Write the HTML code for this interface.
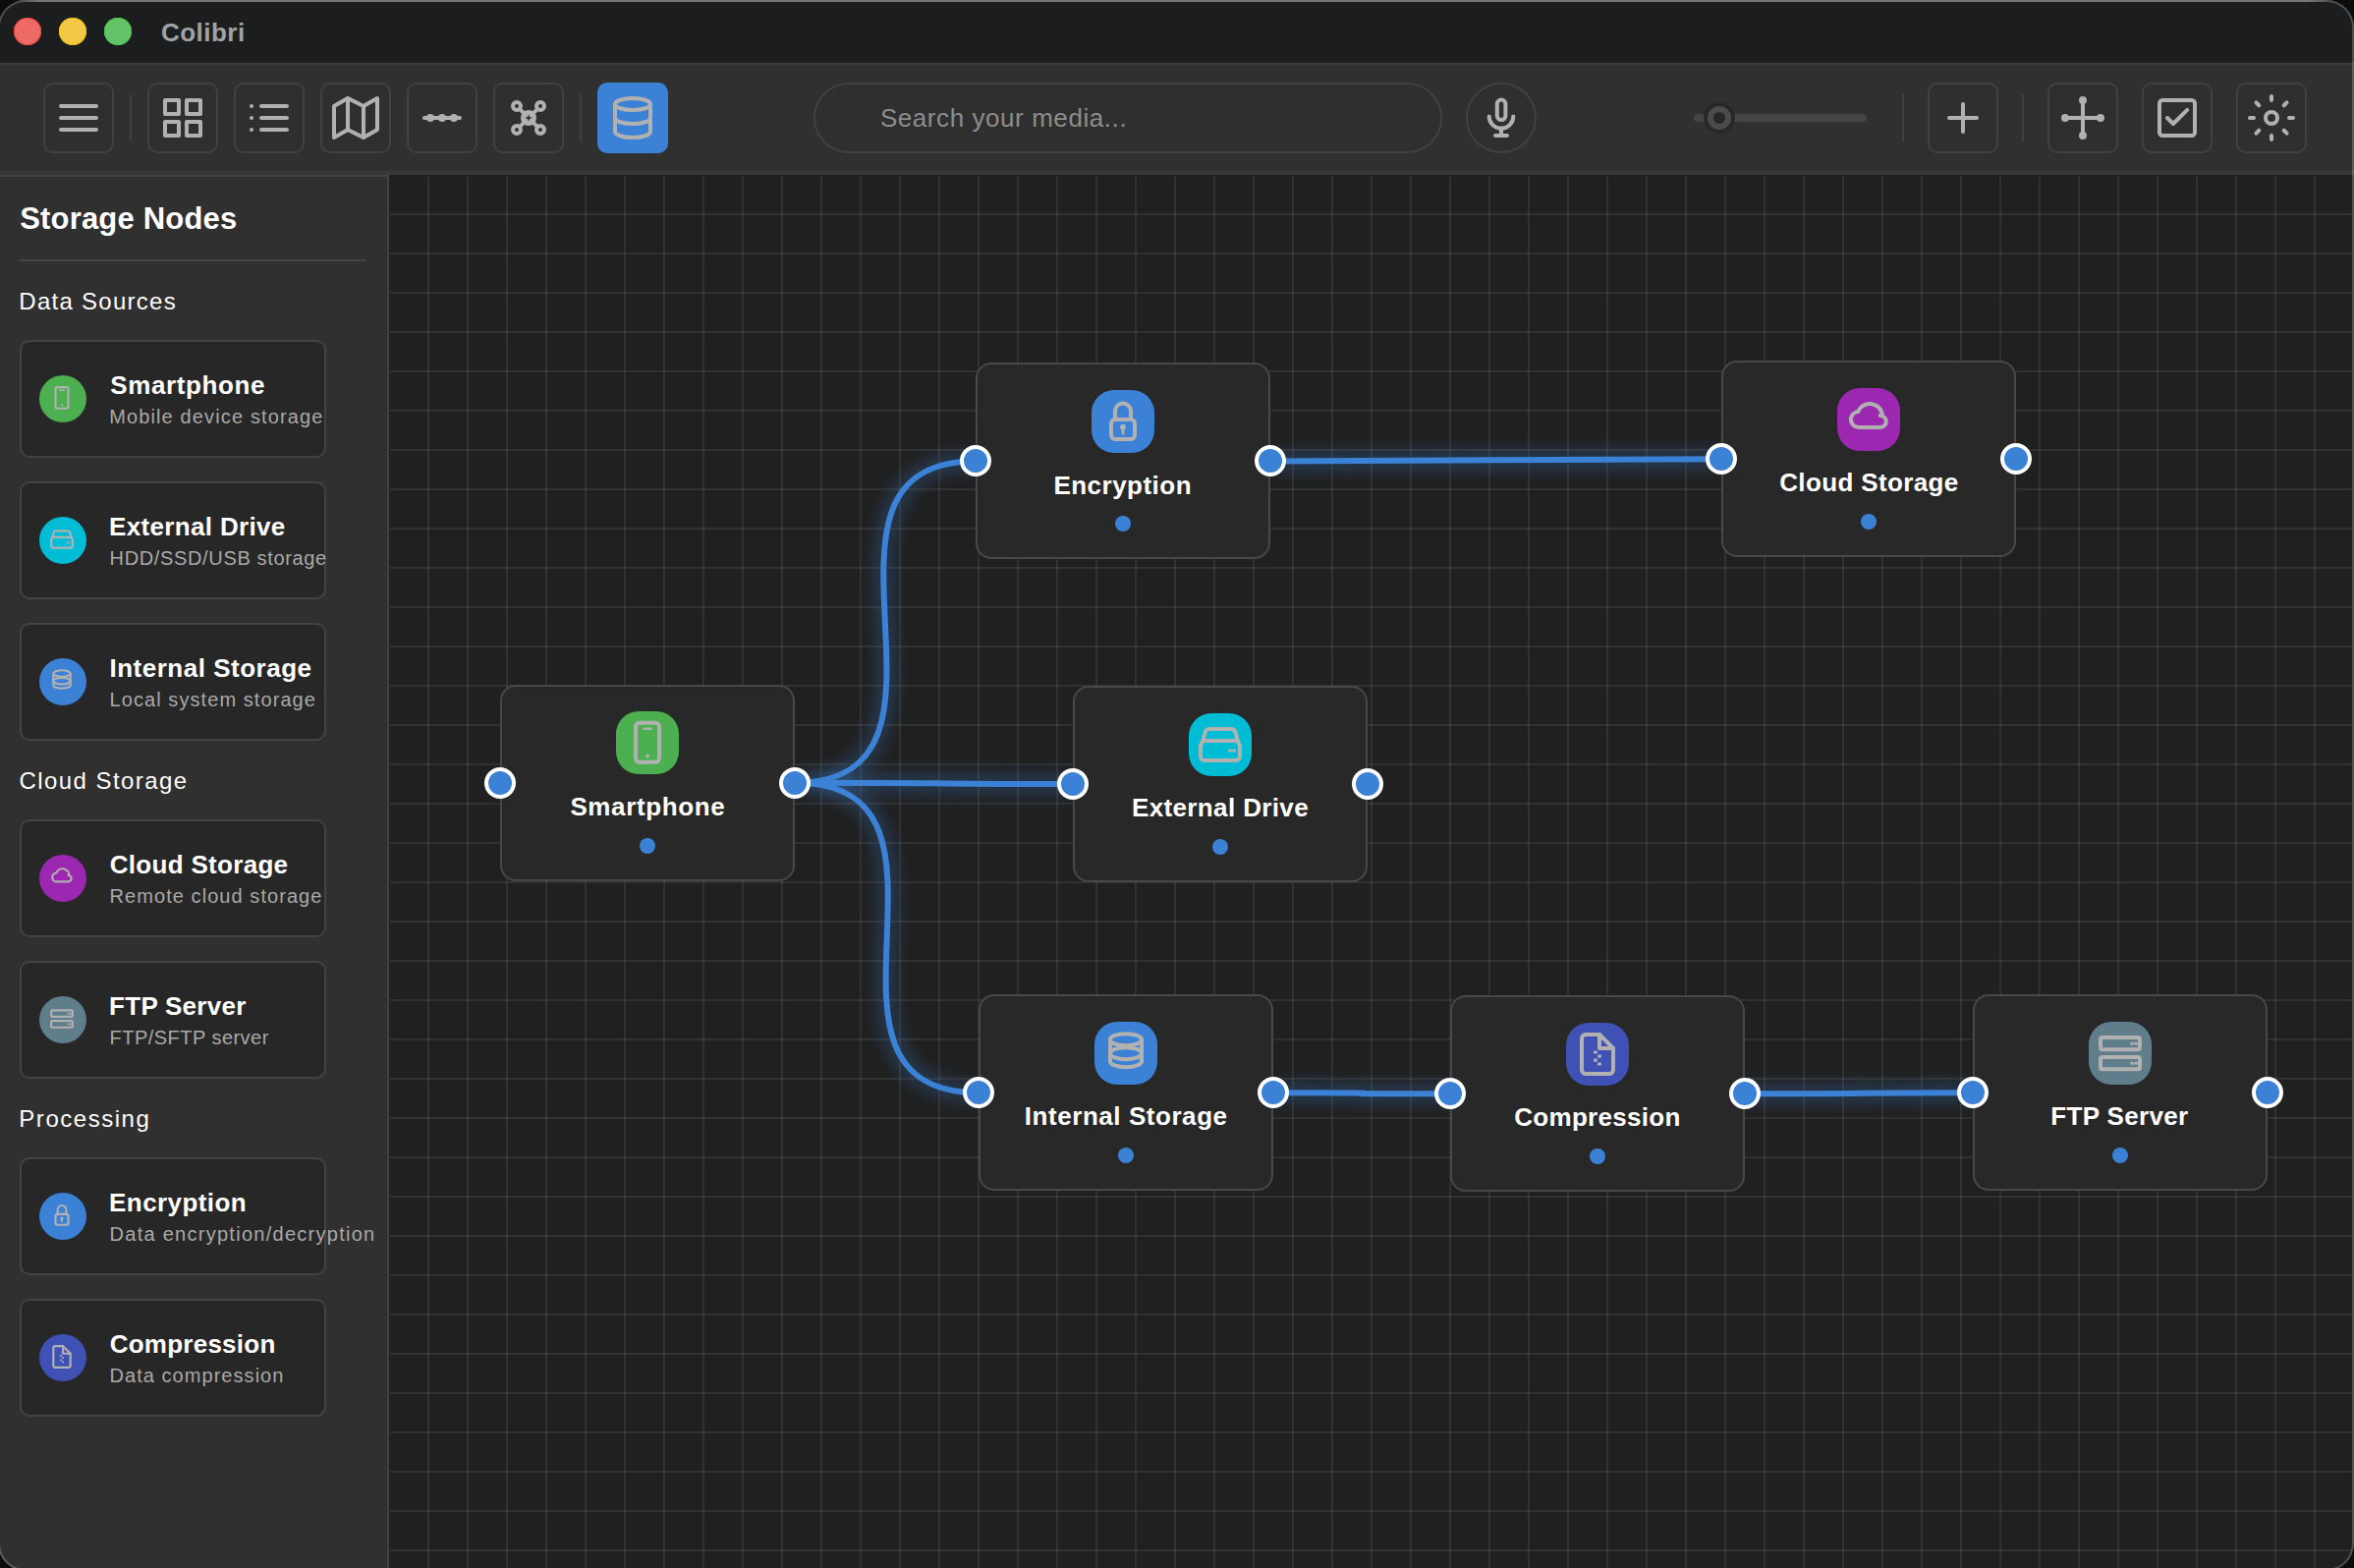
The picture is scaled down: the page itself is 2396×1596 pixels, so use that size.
<!DOCTYPE html>
<html lang="en"><head><meta charset="utf-8"><title>Colibri</title>
<style>
*{box-sizing:border-box;margin:0;padding:0}
html,body{width:2396px;height:1596px;overflow:hidden;background:#0c0c0c}
body{font-family:"Liberation Sans",sans-serif;position:relative}
.abs,.t,.btn,.sep,.card,.node,.h,.dot,.ic,.sic{position:absolute}
.t{white-space:nowrap;line-height:1}
#win{position:absolute;left:-2px;top:0;width:2398px;height:1599px;border-radius:28px;overflow:hidden;background:#202020}
#win > .inner{position:absolute;left:2px;top:0;width:2396px;height:1604px}
#edge{position:absolute;left:-2px;top:0;width:2398px;height:1599px;border-radius:28px;box-shadow:inset 0 0 0 2px rgba(255,255,255,0.215);pointer-events:none}
.btn{width:72px;height:72px;top:84px;border:2px solid #414141;border-radius:10px;background:#2f2f2f}
.btn svg{position:absolute;left:10px;top:10px}
.btn.sel{background:#3b82d6;border-color:#3b82d6}
.sep{width:2px;height:48px;top:96px;background:#3f3f3f}
.card{left:20px;width:312px;height:120px;border:2px solid #434343;border-radius:10px;background:#272727}
.sic{left:40px;width:48px;height:48px;border-radius:50%}
.sic svg{position:absolute;left:10px;top:10px}
.node{width:300px;height:200px;border:2px solid #484848;border-radius:16px;background:#282828}
.ic{width:64px;height:64px;border-radius:23px}
.ic svg{position:absolute;left:8px;top:8px}
.h{width:32px;height:32px;border-radius:50%;border:4px solid #fff;background:#3b82d6}
.dot{width:16px;height:16px;border-radius:50%;background:#3b82d6}
</style></head><body>
<div id="win"><div class="inner">

<div class="abs" style="left:0;top:0;width:2396px;height:64px;background:#1c1d1f"></div>
<div class="abs" style="left:0;top:62px;width:2396px;height:2px;background:#222223"></div>
<div class="abs" style="left:0;top:64px;width:2396px;height:2px;background:#3a3a3a"></div>
<div class="abs" style="left:14px;top:18px;width:28px;height:28px;border-radius:50%;background:#ed6a67;box-shadow:inset 0 0 0 1px #f0443e"></div>
<div class="abs" style="left:60px;top:18px;width:28px;height:28px;border-radius:50%;background:#f3c846;box-shadow:inset 0 0 0 1px #f5bf14"></div>
<div class="abs" style="left:106px;top:18px;width:28px;height:28px;border-radius:50%;background:#62c466;box-shadow:inset 0 0 0 1px #4fc354"></div>
<div class="t" style="left:163.99px;top:20.09px;font-size:26px;font-weight:700;color:#a0a2a3;letter-spacing:0.470px;">Colibri</div>
<div class="abs" style="left:0;top:66px;width:2396px;height:108px;background:#303030"></div>
<div class="abs" style="left:0;top:174px;width:2396px;height:4px;background:#383838"></div>
<div class="btn" style="left:44px"><svg width="48" height="48" viewBox="0 0 24 24" fill="none" stroke="#b2b1b2" stroke-width="2" stroke-linecap="round" stroke-linejoin="round" ><path d="M3 6h18M3 12h18M3 18h18"/></svg></div>
<div class="btn" style="left:150px"><svg width="48" height="48" viewBox="0 0 24 24" fill="none" stroke="#b2b1b2" stroke-width="2" stroke-linecap="round" stroke-linejoin="round" ><rect x="3" y="3" width="7" height="7"/><rect x="14" y="3" width="7" height="7"/><rect x="14" y="14" width="7" height="7"/><rect x="3" y="14" width="7" height="7"/></svg></div>
<div class="btn" style="left:238px"><svg width="48" height="48" viewBox="0 0 24 24" fill="none" stroke="#b2b1b2" stroke-width="2" stroke-linecap="round" stroke-linejoin="round" ><path d="M8 6h13M8 12h13M8 18h13M3 6h.01M3 12h.01M3 18h.01"/></svg></div>
<div class="btn" style="left:326px"><svg width="48" height="48" viewBox="0 0 24 24" fill="none" stroke="#b2b1b2" stroke-width="2" stroke-linecap="round" stroke-linejoin="round" ><path d="M1 6v16l7-4 8 4 7-4V2l-7 4-8-4-7 4z"/><path d="M8 2v16M16 6v16"/></svg></div>
<div class="btn" style="left:414px"><svg width="48" height="48" viewBox="0 0 24 24" fill="none" stroke="#b2b1b2" stroke-width="2" stroke-linecap="round" stroke-linejoin="round" ><path d="M3 12h18"/><circle cx="6" cy="12" r="1" fill="#b2b1b2"/><circle cx="12" cy="12" r="1" fill="#b2b1b2"/><circle cx="18" cy="12" r="1" fill="#b2b1b2"/></svg></div>
<div class="btn" style="left:502px"><svg width="48" height="48" viewBox="0 0 24 24" fill="none" stroke="#b2b1b2" stroke-width="2" stroke-linecap="round" stroke-linejoin="round" ><path d="M7.4 7.4l9.2 9.2M16.6 7.4l-9.2 9.2"/><circle cx="12" cy="12" r="3.5" fill="#b2b1b2" stroke-width="1"/><path d="M12 10.1l.5 1.4 1.4.5-1.4.5-.5 1.4-.5-1.4-1.4-.5 1.4-.5z" fill="#2f2f2f" stroke="none"/><circle cx="6" cy="6" r="2"/><circle cx="18" cy="6" r="2"/><circle cx="6" cy="18" r="2"/><circle cx="18" cy="18" r="2"/></svg></div>
<div class="btn sel" style="left:608px"><svg width="48" height="48" viewBox="0 0 24 24" fill="none" stroke="#b2b1b2" stroke-width="2" stroke-linecap="round" stroke-linejoin="round" ><ellipse cx="12" cy="5" rx="9" ry="3"/><path d="M21 12c0 1.66-4 3-9 3s-9-1.34-9-3"/><path d="M3 5v14c0 1.66 4 3 9 3s9-1.34 9-3V5"/></svg></div>
<div class="btn" style="left:1962px"><svg width="48" height="48" viewBox="0 0 24 24" fill="none" stroke="#b2b1b2" stroke-width="2" stroke-linecap="round" stroke-linejoin="round" ><path d="M12 5v14M5 12h14"/></svg></div>
<div class="btn" style="left:2084px"><svg width="48" height="48" viewBox="0 0 24 24" fill="none" stroke="#b2b1b2" stroke-width="2" stroke-linecap="round" stroke-linejoin="round" ><path d="M12 3v18M3 12h18"/><circle cx="12" cy="3" r="1" fill="#b2b1b2"/><circle cx="12" cy="21" r="1" fill="#b2b1b2"/><circle cx="3" cy="12" r="1" fill="#b2b1b2"/><circle cx="21" cy="12" r="1" fill="#b2b1b2"/></svg></div>
<div class="btn" style="left:2180px"><svg width="48" height="48" viewBox="0 0 24 24" fill="none" stroke="#b2b1b2" stroke-width="2" stroke-linecap="round" stroke-linejoin="round" ><rect x="3" y="3" width="18" height="18" rx="1.6"/><path d="M7 12l3 3 7.1-7.1"/></svg></div>
<div class="btn" style="left:2276px"><svg width="48" height="48" viewBox="0 0 24 24" fill="none" stroke="#b2b1b2" stroke-width="2" stroke-linecap="round" stroke-linejoin="round" ><circle cx="12" cy="12" r="3"/><path d="M12 1v2M12 21v2M4.22 4.22l1.42 1.42M18.36 18.36l1.42 1.42M1 12h2M21 12h2M4.22 19.78l1.42-1.42M18.36 5.64l1.42-1.42"/></svg></div>
<div class="sep" style="left:132px"></div>
<div class="sep" style="left:590px"></div>
<div class="sep" style="left:1936px"></div>
<div class="sep" style="left:2058px"></div>
<div class="abs" style="left:828px;top:84px;width:640px;height:72px;border:2px solid #414141;border-radius:36px;background:#2f2f2f"></div>
<div class="t" style="left:895.89px;top:107.24px;font-size:26px;font-weight:400;color:#8d8d8d;letter-spacing:0.572px;">Search your media...</div>
<div class="abs" style="left:1492px;top:84px;width:72px;height:72px;border:2px solid #414141;border-radius:50%;background:#2f2f2f"></div>
<svg class="abs" style="left:1504px;top:96px" width="48" height="48" viewBox="1504 96 48 48" fill="none" stroke="#b2b1b2" stroke-width="4" stroke-linecap="round" stroke-linejoin="round"><rect x="1523.8" y="101.6" width="8.6" height="20.4" rx="4.3"/><path d="M1515.7 118.5a12.3 12.3 0 0 0 24.6 0"/><path d="M1528 130.5V138M1522 138h12"/></svg>
<div class="abs" style="left:1724px;top:116px;width:176px;height:8px;border-radius:4px;background:#454545"></div>
<div class="abs" style="left:1733.7px;top:104px;width:32px;height:32px;border-radius:50%;background:#4b4b4b;border:4px solid #272727"></div>
<div class="abs" style="left:1743.7px;top:114px;width:12px;height:12px;border-radius:50%;background:#272727"></div>
<div class="abs" style="left:0;top:178px;width:396px;height:1430px;background:#303030;border-top:2px solid #424242;border-right:2px solid #414141"></div>
<div class="t" style="left:20.22px;top:206.66px;font-size:31px;font-weight:700;color:#fff;letter-spacing:0.181px;">Storage Nodes</div>
<div class="abs" style="left:20px;top:264px;width:352px;height:2px;background:#444"></div>
<div class="t" style="left:19.32px;top:294.58px;font-size:24px;font-weight:400;color:#fff;letter-spacing:1.274px;">Data Sources</div>
<div class="t" style="left:19.57px;top:782.78px;font-size:24px;font-weight:400;color:#fff;letter-spacing:1.422px;">Cloud Storage</div>
<div class="t" style="left:19.32px;top:1126.68px;font-size:24px;font-weight:400;color:#fff;letter-spacing:1.533px;">Processing</div>
<div class="card" style="top:346px"></div>
<div class="sic" style="top:382px;background:#4caf50"><svg width="26" height="26" viewBox="0 0 24 24" fill="none" stroke="#b2b1b2" stroke-width="2" stroke-linecap="round" stroke-linejoin="round" ><rect x="6" y="1.9" width="12" height="20" rx="1.9"/><path d="M10.1 4.85h3.8" stroke-width="1.3"/><circle cx="12" cy="18.8" r="1" fill="#b2b1b2" stroke="none"/></svg></div>
<div class="t" style="left:112.29px;top:378.89px;font-size:26px;font-weight:700;color:#fff;letter-spacing:0.597px;">Smartphone</div>
<div class="t" style="left:111.14px;top:414.27px;font-size:20px;font-weight:400;color:#a9a9a9;letter-spacing:1.141px;">Mobile device storage</div>
<div class="card" style="top:490px"></div>
<div class="sic" style="top:526px;background:#00bcd4"><svg width="26" height="26" viewBox="0 0 24 24" fill="none" stroke="#b2b1b2" stroke-width="2" stroke-linecap="round" stroke-linejoin="round" ><path d="M6.5 4H17.5A2.2 2.2 0 0 1 19.65 5.6L20.9 10Q21.25 11.3 22 12.4V18A2 2 0 0 1 20 20H4A2 2 0 0 1 2 18V12.4Q2.75 11.3 3.1 10L4.35 5.6A2.2 2.2 0 0 1 6.5 4Z"/><path d="M3.1 10H20.9"/><g stroke="none" fill="#b2b1b2"><circle cx="17" cy="15" r="0.92"/><circle cx="19.05" cy="15" r="0.92"/><rect x="17" y="14.65" width="2" height="0.7"/></g></svg></div>
<div class="t" style="left:111.08px;top:522.89px;font-size:26px;font-weight:700;color:#fff;letter-spacing:0.331px;">External Drive</div>
<div class="t" style="left:111.54px;top:558.27px;font-size:20px;font-weight:400;color:#a9a9a9;letter-spacing:0.651px;">HDD/SSD/USB storage</div>
<div class="card" style="top:634px"></div>
<div class="sic" style="top:670px;background:#3b82d6"><svg width="26" height="26" viewBox="0 0 24 24" fill="none" stroke="#b2b1b2" stroke-width="2" stroke-linecap="round" stroke-linejoin="round" ><ellipse cx="12" cy="5.1" rx="8" ry="3"/><ellipse cx="12" cy="12.1" rx="8" ry="3"/><path d="M4 5.1V16.1A8 3 0 0 0 20 16.1V5.1"/></svg></div>
<div class="t" style="left:111.47px;top:666.89px;font-size:26px;font-weight:700;color:#fff;letter-spacing:0.509px;">Internal Storage</div>
<div class="t" style="left:111.54px;top:702.27px;font-size:20px;font-weight:400;color:#a9a9a9;letter-spacing:1.074px;">Local system storage</div>
<div class="card" style="top:834px"></div>
<div class="sic" style="top:870px;background:#9c27b0"><svg width="26" height="26" viewBox="0 0 24 24" fill="none" stroke="#b2b1b2" stroke-width="2" stroke-linecap="round" stroke-linejoin="round" ><path d="M17.85 10.0A3 3 0 1 1 18 16H7A4 4 0 0 1 6.66 8.01A6.4 6.4 0 0 1 19 10.17"/></svg></div>
<div class="t" style="left:111.69px;top:866.89px;font-size:26px;font-weight:700;color:#fff;letter-spacing:0.307px;">Cloud Storage</div>
<div class="t" style="left:111.54px;top:902.27px;font-size:20px;font-weight:400;color:#a9a9a9;letter-spacing:1.064px;">Remote cloud storage</div>
<div class="card" style="top:978px"></div>
<div class="sic" style="top:1014px;background:#607d8b"><svg width="26" height="26" viewBox="0 0 24 24" fill="none" stroke="#b2b1b2" stroke-width="2" stroke-linecap="round" stroke-linejoin="round" ><rect x="2" y="4" width="20" height="6.1" rx="1"/><rect x="2" y="14" width="20" height="6.1" rx="1"/><g stroke="none" fill="#b2b1b2"><circle cx="17.95" cy="7.1" r="0.87"/><circle cx="20.05" cy="7.1" r="0.87"/><rect x="17.95" y="6.8" width="2.1" height="0.6"/><circle cx="17.95" cy="17.1" r="0.87"/><circle cx="20.05" cy="17.1" r="0.87"/><rect x="17.95" y="16.8" width="2.1" height="0.6"/></g></svg></div>
<div class="t" style="left:111.08px;top:1010.89px;font-size:26px;font-weight:700;color:#fff;letter-spacing:0.267px;">FTP Server</div>
<div class="t" style="left:111.54px;top:1046.27px;font-size:20px;font-weight:400;color:#a9a9a9;letter-spacing:0.471px;">FTP/SFTP server</div>
<div class="card" style="top:1178px"></div>
<div class="sic" style="top:1214px;background:#3b82d6"><svg width="26" height="26" viewBox="0 0 24 24" fill="none" stroke="#b2b1b2" stroke-width="2" stroke-linecap="round" stroke-linejoin="round" ><rect x="6" y="11" width="12" height="10" rx="2"/><path d="M8 11V6.8a4 4 0 0 1 8 0V11"/><circle cx="12" cy="14.9" r="1.5" fill="#b2b1b2" stroke="none"/><path d="M12 15v3.1" stroke-width="1.4"/></svg></div>
<div class="t" style="left:111.08px;top:1210.89px;font-size:26px;font-weight:700;color:#fff;letter-spacing:0.421px;">Encryption</div>
<div class="t" style="left:111.54px;top:1246.27px;font-size:20px;font-weight:400;color:#a9a9a9;letter-spacing:1.271px;">Data encryption/decryption</div>
<div class="card" style="top:1322px"></div>
<div class="sic" style="top:1358px;background:#3f51b5"><svg width="26" height="26" viewBox="0 0 24 24" fill="none" stroke="#b2b1b2" stroke-width="2" stroke-linecap="round" stroke-linejoin="round" ><path d="M13 2H6a2 2 0 0 0-2 2v16a2 2 0 0 0 2 2h12a2 2 0 0 0 2-2V9z"/><path d="M13 2v7h7"/><g fill="#b2b1b2" stroke="none"><rect x="10.05" y="10.2" width="1.85" height="1.6" rx=".3"/><rect x="12.1" y="12.25" width="1.85" height="1.6" rx=".3"/><rect x="10.05" y="14.25" width="1.85" height="1.6" rx=".3"/><rect x="12.1" y="16.2" width="1.85" height="1.6" rx=".3"/></g></svg></div>
<div class="t" style="left:111.69px;top:1354.89px;font-size:26px;font-weight:700;color:#fff;letter-spacing:0.243px;">Compression</div>
<div class="t" style="left:111.54px;top:1390.27px;font-size:20px;font-weight:400;color:#a9a9a9;letter-spacing:1.047px;">Data compression</div>
<div class="abs" id="canvas" style="left:396px;top:178px;width:1998px;height:1430px;background:#202020"><div class="abs" style="left:1px;top:1px;width:1997px;height:1429px;background-image:linear-gradient(to right,rgba(255,255,255,0.08) 0,rgba(255,255,255,0.08) 2px,transparent 2px),linear-gradient(to bottom,rgba(255,255,255,0.08) 0,rgba(255,255,255,0.08) 2px,transparent 2px);background-size:40px 40px;background-position:-2px -2px"></div></div>
<svg class="abs" style="left:0;top:0;overflow:visible" width="2396" height="1604" viewBox="0 0 2396 1604" fill="none"><defs><filter id="glow" x="0" y="0" width="2396" height="1604" filterUnits="userSpaceOnUse"><feGaussianBlur stdDeviation="10.2"/></filter></defs><g stroke="#3b82d6" stroke-width="6" opacity="0.9" filter="url(#glow)" stroke-linecap="round"><path d="M809.0 796.7C1009.0 796.7 792.7 469.4 992.7 469.4"/><path d="M809.0 796.7C1009.0 796.7 892.3 798.0 1092.3 798.0"/><path d="M809.0 796.7C1009.0 796.7 796.4 1112.3 996.4 1112.3"/><path d="M1292.7 469.4C1492.7 469.4 1552.3 467.2 1752.3 467.2"/><path d="M1296.4 1112.3C1496.4 1112.3 1275.6 1113.3 1475.6 1113.3"/><path d="M1775.6 1113.3C1975.6 1113.3 1808.1 1112.2 2008.1 1112.2"/></g><g stroke="#3b82d6" stroke-width="6" stroke-linecap="round"><path d="M809.0 796.7C1009.0 796.7 792.7 469.4 992.7 469.4"/><path d="M809.0 796.7C1009.0 796.7 892.3 798.0 1092.3 798.0"/><path d="M809.0 796.7C1009.0 796.7 796.4 1112.3 996.4 1112.3"/><path d="M1292.7 469.4C1492.7 469.4 1552.3 467.2 1752.3 467.2"/><path d="M1296.4 1112.3C1496.4 1112.3 1275.6 1113.3 1475.6 1113.3"/><path d="M1775.6 1113.3C1975.6 1113.3 1808.1 1112.2 2008.1 1112.2"/></g></svg>
<div class="node" style="left:509.0px;top:696.7px"></div>
<div class="node" style="left:992.7px;top:369.4px"></div>
<div class="node" style="left:1752.3px;top:367.2px"></div>
<div class="node" style="left:1092.3px;top:698.0px"></div>
<div class="node" style="left:996.4px;top:1012.3px"></div>
<div class="node" style="left:1475.6px;top:1013.3px"></div>
<div class="node" style="left:2008.1px;top:1012.2px"></div>
<div class="ic" style="left:627.0px;top:724.4px;background:#4caf50"><svg width="48" height="48" viewBox="0 0 24 24" fill="none" stroke="#b2b1b2" stroke-width="2" stroke-linecap="round" stroke-linejoin="round" ><rect x="6" y="1.9" width="12" height="20" rx="1.9"/><path d="M10.1 4.85h3.8" stroke-width="1.3"/><circle cx="12" cy="18.8" r="1" fill="#b2b1b2" stroke="none"/></svg></div>
<div class="t" style="left:580.39px;top:807.89px;font-size:26px;font-weight:700;color:#fff;letter-spacing:0.641px;">Smartphone</div>
<div class="dot" style="left:651.0px;top:852.5px"></div>
<div class="h" style="left:493.0px;top:780.7px"></div>
<div class="h" style="left:793.0px;top:780.7px"></div>
<div class="ic" style="left:1110.7px;top:397.1px;background:#3b82d6"><svg width="48" height="48" viewBox="0 0 24 24" fill="none" stroke="#b2b1b2" stroke-width="2" stroke-linecap="round" stroke-linejoin="round" ><rect x="6" y="11" width="12" height="10" rx="2"/><path d="M8 11V6.8a4 4 0 0 1 8 0V11"/><circle cx="12" cy="14.9" r="1.5" fill="#b2b1b2" stroke="none"/><path d="M12 15v3.1" stroke-width="1.4"/></svg></div>
<div class="t" style="left:1072.42px;top:480.59px;font-size:26px;font-weight:700;color:#fff;letter-spacing:0.488px;">Encryption</div>
<div class="dot" style="left:1134.7px;top:525.2px"></div>
<div class="h" style="left:976.7px;top:453.4px"></div>
<div class="h" style="left:1276.7px;top:453.4px"></div>
<div class="ic" style="left:1870.3px;top:394.9px;background:#9c27b0"><svg width="48" height="48" viewBox="0 0 24 24" fill="none" stroke="#b2b1b2" stroke-width="2" stroke-linecap="round" stroke-linejoin="round" ><path d="M17.85 10.0A3 3 0 1 1 18 16H7A4 4 0 0 1 6.66 8.01A6.4 6.4 0 0 1 19 10.17"/></svg></div>
<div class="t" style="left:1811.19px;top:478.39px;font-size:26px;font-weight:700;color:#fff;letter-spacing:0.366px;">Cloud Storage</div>
<div class="dot" style="left:1894.3px;top:523.0px"></div>
<div class="h" style="left:1736.3px;top:451.2px"></div>
<div class="h" style="left:2036.3px;top:451.2px"></div>
<div class="ic" style="left:1210.3px;top:725.7px;background:#00bcd4"><svg width="48" height="48" viewBox="0 0 24 24" fill="none" stroke="#b2b1b2" stroke-width="2" stroke-linecap="round" stroke-linejoin="round" ><path d="M6.5 4H17.5A2.2 2.2 0 0 1 19.65 5.6L20.9 10Q21.25 11.3 22 12.4V18A2 2 0 0 1 20 20H4A2 2 0 0 1 2 18V12.4Q2.75 11.3 3.1 10L4.35 5.6A2.2 2.2 0 0 1 6.5 4Z"/><path d="M3.1 10H20.9"/><g stroke="none" fill="#b2b1b2"><circle cx="17" cy="15" r="0.92"/><circle cx="19.05" cy="15" r="0.92"/><rect x="17" y="14.65" width="2" height="0.7"/></g></svg></div>
<div class="t" style="left:1151.97px;top:809.19px;font-size:26px;font-weight:700;color:#fff;letter-spacing:0.370px;">External Drive</div>
<div class="dot" style="left:1234.3px;top:853.8px"></div>
<div class="h" style="left:1076.3px;top:782.0px"></div>
<div class="h" style="left:1376.3px;top:782.0px"></div>
<div class="ic" style="left:1114.4px;top:1040.0px;background:#3b82d6"><svg width="48" height="48" viewBox="0 0 24 24" fill="none" stroke="#b2b1b2" stroke-width="2" stroke-linecap="round" stroke-linejoin="round" ><ellipse cx="12" cy="5.1" rx="8" ry="3"/><ellipse cx="12" cy="12.1" rx="8" ry="3"/><path d="M4 5.1V16.1A8 3 0 0 0 20 16.1V5.1"/></svg></div>
<div class="t" style="left:1042.78px;top:1123.49px;font-size:26px;font-weight:700;color:#fff;letter-spacing:0.556px;">Internal Storage</div>
<div class="dot" style="left:1138.4px;top:1168.1px"></div>
<div class="h" style="left:980.4px;top:1096.3px"></div>
<div class="h" style="left:1280.4px;top:1096.3px"></div>
<div class="ic" style="left:1593.6px;top:1041.0px;background:#3f51b5"><svg width="48" height="48" viewBox="0 0 24 24" fill="none" stroke="#b2b1b2" stroke-width="2" stroke-linecap="round" stroke-linejoin="round" ><path d="M13 2H6a2 2 0 0 0-2 2v16a2 2 0 0 0 2 2h12a2 2 0 0 0 2-2V9z"/><path d="M13 2v7h7"/><g fill="#b2b1b2" stroke="none"><rect x="10.05" y="10.2" width="1.85" height="1.6" rx=".3"/><rect x="12.1" y="12.25" width="1.85" height="1.6" rx=".3"/><rect x="10.05" y="14.25" width="1.85" height="1.6" rx=".3"/><rect x="12.1" y="16.2" width="1.85" height="1.6" rx=".3"/></g></svg></div>
<div class="t" style="left:1541.29px;top:1124.49px;font-size:26px;font-weight:700;color:#fff;letter-spacing:0.293px;">Compression</div>
<div class="dot" style="left:1617.6px;top:1169.1px"></div>
<div class="h" style="left:1459.6px;top:1097.3px"></div>
<div class="h" style="left:1759.6px;top:1097.3px"></div>
<div class="ic" style="left:2126.1px;top:1039.9px;background:#607d8b"><svg width="48" height="48" viewBox="0 0 24 24" fill="none" stroke="#b2b1b2" stroke-width="2" stroke-linecap="round" stroke-linejoin="round" ><rect x="2" y="4" width="20" height="6.1" rx="1"/><rect x="2" y="14" width="20" height="6.1" rx="1"/><g stroke="none" fill="#b2b1b2"><circle cx="17.95" cy="7.1" r="0.87"/><circle cx="20.05" cy="7.1" r="0.87"/><rect x="17.95" y="6.8" width="2.1" height="0.6"/><circle cx="17.95" cy="17.1" r="0.87"/><circle cx="20.05" cy="17.1" r="0.87"/><rect x="17.95" y="16.8" width="2.1" height="0.6"/></g></svg></div>
<div class="t" style="left:2087.22px;top:1123.39px;font-size:26px;font-weight:700;color:#fff;letter-spacing:0.356px;">FTP Server</div>
<div class="dot" style="left:2150.1px;top:1168.0px"></div>
<div class="h" style="left:1992.1px;top:1096.2px"></div>
<div class="h" style="left:2292.1px;top:1096.2px"></div>
</div></div>
<div id="edge"></div>
<div class="abs" style="left:16px;top:0;width:2360px;height:2px;background:linear-gradient(to right,rgba(116,118,120,0) 0,#747678 24px,#747678 2332px,rgba(116,118,120,0) 2360px)"></div>
</body></html>
